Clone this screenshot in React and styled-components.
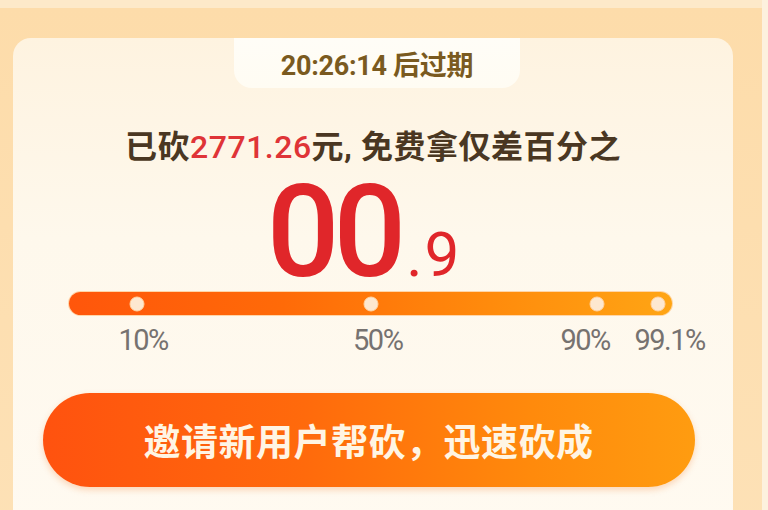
import React from "react";
import styled, { createGlobalStyle } from "styled-components";

const GlobalStyle = createGlobalStyle`
  html, body {
    margin: 0;
    padding: 0;
    background: #fdf1de;
  }
  body {
    font-family: Roboto, "Noto Sans CJK SC", sans-serif;
    overflow: hidden;
  }
`;

const marks = [
  { dot: 11.3, label: 12.3, text: "10%" },
  { dot: 50, label: 51.2, text: "50%" },
  { dot: 87.6, label: 85.6, text: "90%" },
  { dot: 97.7, label: 99.6, text: "99.1%" },
];

export default function App() {
  return (
    <>
      <GlobalStyle />
      <Page>
        <TopStrip />
        <Panel>
          <Card>
            <Timer>20:26:14 后过期</Timer>
            <Summary>
              已砍<Red>2771.26</Red>元, 免费拿仅差百分之
            </Summary>
            <NumberRow>
              <BigDigits>00</BigDigits>
              <SmallDigits>.9</SmallDigits>
            </NumberRow>
            <Progress>
              <Track>
                {marks.map((m) => (
                  <Dot key={m.text} style={{ left: `${m.dot}%` }} />
                ))}
              </Track>
              <Labels>
                {marks.map((m) => (
                  <Label key={m.text} style={{ left: `${m.label}%` }}>
                    {m.text}
                  </Label>
                ))}
              </Labels>
            </Progress>
            <InviteButton>邀请新用户帮砍，迅速砍成</InviteButton>
          </Card>
        </Panel>
      </Page>
    </>
  );
}

const Page = styled.main`
  width: 768px;
  height: 510px;
  display: flex;
  flex-direction: column;
  overflow: hidden;
`;

const TopStrip = styled.div`
  flex-shrink: 0;
  height: 8px;
  width: 762px;
  background: #fde9c9;
`;

const Panel = styled.section`
  flex: 1 0 auto;
  width: 762px;
  background: linear-gradient(180deg, #fddcaa 0%, #fde1b6 100%);
  padding: 30px 29px 0 13px;
  box-sizing: border-box;
`;

const Card = styled.div`
  height: 500px;
  border-radius: 18px;
  background: linear-gradient(180deg, #fef3e0 0%, #fef8ec 40%, #fffaf1 100%);
  display: flex;
  flex-direction: column;
  align-items: center;
`;

const Timer = styled.div`
  width: 286px;
  height: 50px;
  margin-left: 8px;
  border-radius: 0 0 18px 18px;
  background: linear-gradient(180deg, #fffdf7 0%, #fffcf3 100%);
  display: flex;
  align-items: center;
  justify-content: center;
  font-size: 27px;
  font-weight: 700;
  color: #7a5a20;
  letter-spacing: -0.3px;
`;

const Summary = styled.div`
  margin-top: 39px;
  height: 40px;
  line-height: 40px;
  font-size: 32px;
  font-weight: 700;
  color: #4a3722;
  letter-spacing: 0.5px;
`;

const Red = styled.span`
  color: #df3437;
  font-weight: 500;
`;

const NumberRow = styled.div`
  display: flex;
  align-items: baseline;
  margin-top: 6px;
  margin-left: -18px;
  height: 118px;
  line-height: 118px;
  color: #e0262a;
`;

const BigDigits = styled.span`
  font-family: Roboto, "Liberation Sans", sans-serif;
  font-size: 128px;
  font-weight: 500;
  letter-spacing: -6px;
`;

const SmallDigits = styled.span`
  font-family: Roboto, "Liberation Sans", sans-serif;
  font-size: 62px;
  font-weight: 400;
  margin-left: 6px;
  letter-spacing: 2px;
`;

const Progress = styled.div`
  margin-top: 1px;
  width: 603px;
  margin-left: -5px;
`;

const Track = styled.div`
  position: relative;
  height: 23px;
  border-radius: 12px;
  background: linear-gradient(90deg, #ff560b 0%, #ff6a08 35%, #ff8b0c 70%, #ffa514 100%);
  box-shadow: 0 0 0 1px rgba(255, 190, 120, 0.6);
`;

const Dot = styled.span`
  position: absolute;
  top: 50%;
  width: 15px;
  height: 15px;
  border-radius: 50%;
  background: #fde8d0;
  border: 1px solid #ffd3a2;
  transform: translate(-50%, -50%);
  box-sizing: border-box;
`;

const Labels = styled.div`
  position: relative;
  height: 44px;
`;

const Label = styled.span`
  position: absolute;
  top: 8px;
  transform: translateX(-50%);
  font-size: 29px;
  letter-spacing: -1.5px;
  color: #767270;
  white-space: nowrap;
  line-height: 34px;
`;

const InviteButton = styled.button`
  margin-top: 34px;
  margin-left: -9px;
  width: 652px;
  height: 94px;
  border: none;
  border-radius: 47px;
  background: linear-gradient(90deg, #ff520f 0%, #ff6a0c 40%, #ff8a0c 75%, #ff9c10 100%);
  box-shadow: 0 3px 6px rgba(240, 110, 20, 0.25);
  color: #fff5e4;
  font-family: "Noto Sans CJK SC", sans-serif;
  font-size: 37px;
  font-weight: 700;
  letter-spacing: 0.5px;
  cursor: pointer;
`;
